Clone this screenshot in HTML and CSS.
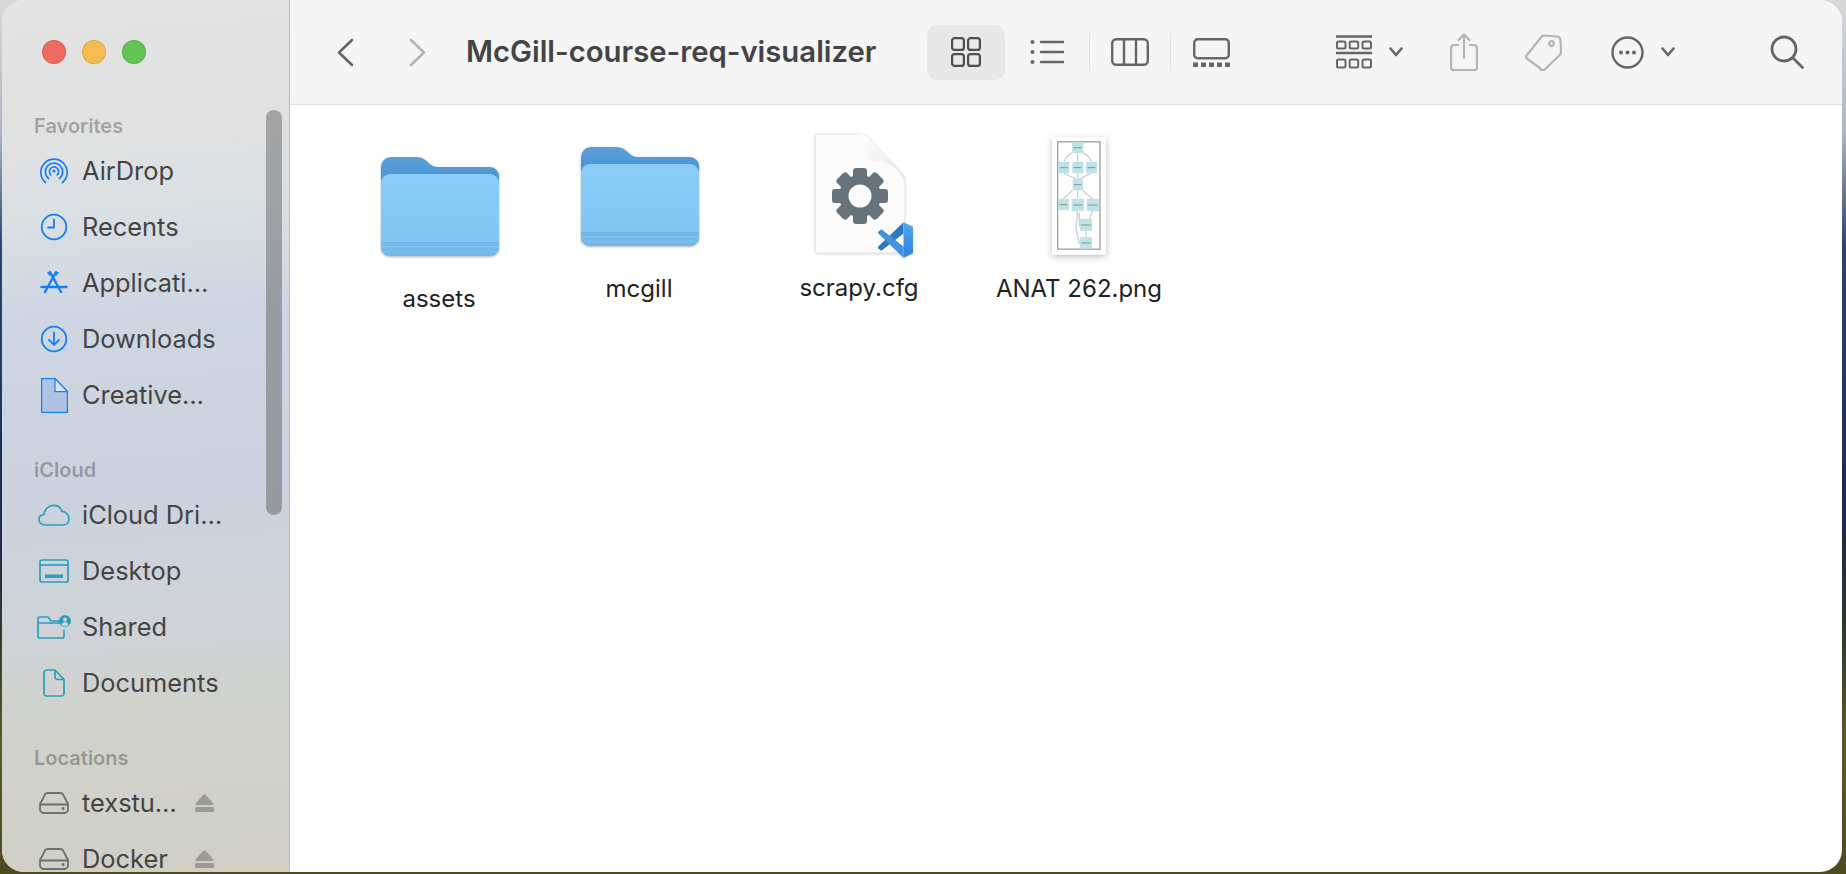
FILE: index.html
```html
<!DOCTYPE html>
<html lang="en">
<head>
  <meta charset="UTF-8" />
  <meta name="viewport" content="width=device-width, initial-scale=1">
  <title>McGill-course-req-visualizer</title>
  <link rel="stylesheet" href="styles.css">
</head>
<body>

<svg class="sprite" aria-hidden="true">
  <defs>
    <linearGradient id="folder-back" x1="0" y1="0" x2="0" y2="1">
      <stop offset="0" stop-color="#5a9fd8"/>
      <stop offset="1" stop-color="#3f8ed6"/>
    </linearGradient>
    <linearGradient id="folder-front" x1="0" y1="0" x2="0" y2="1">
      <stop offset="0" stop-color="#8bcdf8"/>
      <stop offset="1" stop-color="#7fc4f3"/>
    </linearGradient>
    <linearGradient id="badge-right" x1="0" y1="0" x2="0" y2="1">
      <stop offset="0" stop-color="#4fa8f0"/>
      <stop offset="1" stop-color="#2a80dc"/>
    </linearGradient>
    <linearGradient id="doc-fold" x1="0" y1="0" x2="1" y2="1">
      <stop offset="0" stop-color="#ffffff"/>
      <stop offset="1" stop-color="#e4e4e4"/>
    </linearGradient>
    <symbol id="folder" viewBox="0 0 118 99">
      <path fill="url(#folder-back)" d="M0 10a10 10 0 0 1 10-10h24c5 0 8 1 11 3.500c4 3.500 6 6.500 12 6.500h52a9 9 0 0 1 9 9v20h-118z"/>
      <path fill="url(#folder-front)" d="M0 26a9 9 0 0 1 9-9h100a9 9 0 0 1 9 9v64a9 9 0 0 1-9 9h-100a9 9 0 0 1-9-9z"/>
      <path fill="#74b8ea" d="M0 85h118v5a9 9 0 0 1-9 9h-100a9 9 0 0 1-9-9z"/>
      <rect y="89" width="118" height="1.500" fill="#84c4f0"/>
      <rect y="94" width="118" height="1" fill="#7ebeed"/>
    </symbol>
    <symbol id="drive" viewBox="0 0 30 22">
      <path fill="none" stroke="#6f6f6c" stroke-width="1.800" d="M6 2.500c.5-1 1.300-1.500 2.500-1.500h13c1.200 0 2 .5 2.500 1.500l5 9.500v5.500a3.500 3.500 0 0 1-3.500 3.500h-21a3.500 3.500 0 0 1-3.500-3.500v-5.500zM1 12.500h28"/>
      <circle cx="24" cy="16.500" r="1.500" fill="#6f6f6c"/>
    </symbol>
    <symbol id="eject" viewBox="0 0 19 18">
      <path fill="#9b9b93" d="M8 1a2 2 0 0 1 3 0l7.500 8.500c.5.700.2 1.500-.8 1.500h-16.400c-1 0-1.300-.8-.8-1.500z"/>
      <rect y="13" width="19" height="5" rx="1.500" fill="#9b9b93"/>
    </symbol>
  </defs>
</svg>

<div class="window">
  <aside class="sidebar">
    <div class="lights">
      <span class="light red"></span>
      <span class="light yellow"></span>
      <span class="light green"></span>
    </div>

    <h3 class="side-title">Favorites</h3>
    <div class="side-row">
      <span class="side-icon">
        <svg width="28" height="28" viewBox="0 0 28 28" fill="none" stroke="#157efb" stroke-width="1.700" stroke-linecap="round">
          <path d="M5.500 25.500a13.200 13.200 0 1 1 17 0"/>
          <path d="M8.500 21.500a8.700 8.700 0 1 1 11 0"/>
          <path d="M10.800 17.800a4.600 4.600 0 1 1 6.400 0"/>
          <circle cx="14" cy="14" r="1.600" fill="#157efb" stroke="none"/>
        </svg>
      </span>
      <span class="side-name">AirDrop</span>
    </div>
    <div class="side-row">
      <span class="side-icon">
        <svg width="28" height="28" viewBox="0 0 28 28" fill="none" stroke="#157efb" stroke-width="1.800" stroke-linecap="round" stroke-linejoin="round">
          <circle cx="14" cy="14" r="12.300"/>
          <path d="M14 6.500v8h-6"/>
        </svg>
      </span>
      <span class="side-name">Recents</span>
    </div>
    <div class="side-row">
      <span class="side-icon">
        <svg width="28" height="26" viewBox="0 0 28 26" fill="none" stroke="#157efb" stroke-width="2.400" stroke-linecap="round">
          <path d="M10 2l11 20M16 2l-11 20M1.500 17h25"/>
          <path d="M8 2.500l2 2.500M18 2.500l-2 2.500" stroke-width="1.600"/>
        </svg>
      </span>
      <span class="side-name">Applicati…</span>
    </div>
    <div class="side-row">
      <span class="side-icon">
        <svg width="28" height="28" viewBox="0 0 28 28" fill="none" stroke="#157efb" stroke-width="1.800" stroke-linecap="round" stroke-linejoin="round">
          <circle cx="14" cy="14" r="12.300"/>
          <path d="M14 7.500v12M9 14.800l5 5 5-5"/>
        </svg>
      </span>
      <span class="side-name">Downloads</span>
    </div>
    <div class="side-row">
      <span class="side-icon">
        <svg width="27" height="35" viewBox="0 0 27 35">
          <path fill="#aec3e4" stroke="#157efb" stroke-width="1.200" d="M.6.600h13.400l12.400 13v20.800h-25.800z"/>
          <path fill="#dbe3f0" stroke="#157efb" stroke-width="1.200" d="M14 .6v13h12.400z"/>
        </svg>
      </span>
      <span class="side-name">Creative…</span>
    </div>

    <h3 class="side-title spaced">iCloud</h3>
    <div class="side-row">
      <span class="side-icon">
        <svg width="32" height="22" viewBox="0 0 32 22" fill="none" stroke="#2aa0b8" stroke-width="1.700" stroke-linejoin="round">
          <path d="M7 21c-3.500 0-6-2.300-6-5.300 0-2.800 2-4.800 4.800-5 .8-5.500 4.700-9.300 9.700-9.300 4.200 0 7.300 2.400 8.500 6 4 .2 7 3.500 7 7.500 0 3.500-2.500 6.100-6 6.100z"/>
        </svg>
      </span>
      <span class="side-name">iCloud Dri…</span>
    </div>
    <div class="side-row">
      <span class="side-icon">
        <svg width="30" height="24" viewBox="0 0 30 24" fill="none" stroke="#2aa0b8" stroke-width="1.700">
          <rect x="1" y="1" width="28" height="22" rx="2"/>
          <path d="M1 6h28"/>
          <rect x="6" y="15.500" width="18" height="3.500" fill="#2aa0b8" stroke="none"/>
        </svg>
      </span>
      <span class="side-name">Desktop</span>
    </div>
    <div class="side-row">
      <span class="side-icon">
        <svg width="34" height="24" viewBox="0 0 34 24" fill="none" stroke="#2aa0b8" stroke-width="1.700" stroke-linejoin="round">
          <path d="M23 6h-9l-3-4h-8a2 2 0 0 0-2 2v17a2 2 0 0 0 2 2h22a2 2 0 0 0 2-2v-6M1 8h22"/>
          <circle cx="28" cy="6" r="6" fill="#2aa0b8" stroke="none"/>
          <circle cx="28" cy="4.500" r="1.900" fill="#cfd5de" stroke="none"/>
          <path d="M24.500 10c.5-2 1.800-3 3.500-3s3 1 3.500 3a6 6 0 0 1-7 0z" fill="#cfd5de" stroke="none"/>
        </svg>
      </span>
      <span class="side-name">Shared</span>
    </div>
    <div class="side-row">
      <span class="side-icon">
        <svg width="22" height="28" viewBox="0 0 22 28" fill="none" stroke="#2aa0b8" stroke-width="1.700" stroke-linejoin="round">
          <path d="M3.500 1h8.500l9 9.500v14a2.500 2.500 0 0 1-2.500 2.500h-15a2.500 2.500 0 0 1-2.500-2.500v-21a2.500 2.500 0 0 1 2.500-2.500zM12 1v7a2.500 2.500 0 0 0 2.500 2.500h6.500"/>
        </svg>
      </span>
      <span class="side-name">Documents</span>
    </div>

    <h3 class="side-title spaced">Locations</h3>
    <div class="side-row">
      <span class="side-icon"><svg width="30" height="22"><use href="#drive"/></svg></span>
      <span class="side-name short">texstu…</span>
      <svg class="eject" width="19" height="18"><use href="#eject"/></svg>
    </div>
    <div class="side-row">
      <span class="side-icon"><svg width="30" height="22"><use href="#drive"/></svg></span>
      <span class="side-name short">Docker</span>
      <svg class="eject" width="19" height="18"><use href="#eject"/></svg>
    </div>

    <div class="scroll-thumb"></div>
  </aside>

  <div class="content">
    <header class="toolbar">
      <svg class="back" width="17" height="29" viewBox="0 0 17 29" fill="none" stroke="#666" stroke-width="2.600" stroke-linecap="round" stroke-linejoin="round"><path d="M15 2l-13 12.500 13 12.500"/></svg>
      <svg class="forward" width="17" height="29" viewBox="0 0 17 29" fill="none" stroke="#b4b4b4" stroke-width="2.600" stroke-linecap="round" stroke-linejoin="round"><path d="M2 2l13 12.500-13 12.500"/></svg>
      <h1 class="title">McGill-course-req-visualizer</h1>

      <span class="view-selected">
        <svg width="30" height="30" viewBox="0 0 30 30" fill="none" stroke="#4f4f4f" stroke-width="2.200">
          <rect x="1.100" y="1.100" width="11.800" height="11.800" rx="2.500"/>
          <rect x="17.100" y="1.100" width="11.800" height="11.800" rx="2.500"/>
          <rect x="1.100" y="17.100" width="11.800" height="11.800" rx="2.500"/>
          <rect x="17.100" y="17.100" width="11.800" height="11.800" rx="2.500"/>
        </svg>
      </span>
      <svg class="t-list" width="34" height="26" viewBox="0 0 34 26" fill="none" stroke="#666" stroke-width="2.600" stroke-linecap="round">
        <path d="M11 3h22M11 13h22M11 23h22"/>
        <g fill="#666" stroke="none"><circle cx="2.500" cy="3" r="2"/><circle cx="2.500" cy="13" r="2"/><circle cx="2.500" cy="23" r="2"/></g>
      </svg>
      <span class="t-divider"></span>
      <svg class="t-col" width="38" height="28" viewBox="0 0 38 28" fill="none" stroke="#666" stroke-width="2.400">
        <rect x="1.200" y="1.200" width="35.600" height="25.600" rx="4"/>
        <path d="M13 1.200v25.600M25 1.200v25.600"/>
      </svg>
      <span class="t-divider d2"></span>
      <svg class="t-gallery" width="37" height="29" viewBox="0 0 37 29" fill="none" stroke="#666" stroke-width="2.400">
        <rect x="1.200" y="1.200" width="34.600" height="19" rx="3.500"/>
        <g fill="#666" stroke="none"><rect y="24.500" width="5" height="4.500"/><rect x="8" y="24.500" width="5" height="4.500"/><rect x="16" y="24.500" width="5" height="4.500"/><rect x="24" y="24.500" width="5" height="4.500"/><rect x="32" y="24.500" width="5" height="4.500"/></g>
      </svg>
      <svg class="t-group" width="36" height="34" viewBox="0 0 36 34" fill="none" stroke="#666" stroke-width="2">
        <path d="M0 1.500h36M0 18h36" stroke-width="2.600"/>
        <rect x="1" y="6.500" width="8.500" height="7" rx="1.500"/><rect x="13.700" y="6.500" width="8.500" height="7" rx="1.500"/><rect x="26.500" y="6.500" width="8.500" height="7" rx="1.500"/>
        <rect x="1" y="24.500" width="8.500" height="8" rx="1.500"/><rect x="13.700" y="24.500" width="8.500" height="8" rx="1.500"/><rect x="26.500" y="24.500" width="8.500" height="8" rx="1.500"/>
      </svg>
      <svg class="t-chev" width="14" height="10" viewBox="0 0 14 10" fill="none" stroke="#666" stroke-width="2.600" stroke-linecap="round" stroke-linejoin="round"><path d="M1.500 1.500l5.500 6.500 5.500-6.500"/></svg>
      <svg class="t-share" width="28" height="38" viewBox="0 0 28 38" fill="none" stroke="#b4b4b4" stroke-width="2.200" stroke-linecap="round" stroke-linejoin="round">
        <path d="M8 12h-4a3 3 0 0 0-3 3v19a3 3 0 0 0 3 3h20a3 3 0 0 0 3-3v-19a3 3 0 0 0-3-3h-4"/>
        <path d="M14 25v-23M8.500 7l5.500-5.500 5.500 5.500"/>
      </svg>
      <svg class="t-tag" width="37" height="37" viewBox="0 0 37 37" fill="none" stroke="#b4b4b4" stroke-width="2.200" stroke-linejoin="round">
        <path d="M15.500 34.500l-13-9.500c-1.500-1-1.600-2.500-.8-3.800l14.500-18c.7-1 1.600-1.700 3-1.700l12.500 1c2 .2 3.500 1.300 3.800 3.500l.5 11.500c0 1.300-.3 2.300-1 3.300l-14.500 14c-1.500 1.300-3.500 1.700-5 .7z"/>
        <circle cx="26.500" cy="9.500" r="2.300"/>
      </svg>
      <svg class="t-more" width="33" height="33" viewBox="0 0 33 33" fill="none" stroke="#666" stroke-width="2.400">
        <circle cx="16.500" cy="16.500" r="15"/>
        <g fill="#666" stroke="none"><circle cx="10" cy="16.500" r="2"/><circle cx="16.500" cy="16.500" r="2"/><circle cx="23" cy="16.500" r="2"/></g>
      </svg>
      <svg class="t-chev" width="14" height="10" viewBox="0 0 14 10" fill="none" stroke="#666" stroke-width="2.600" stroke-linecap="round" stroke-linejoin="round"><path d="M1.500 1.500l5.500 6.500 5.500-6.500"/></svg>
      <svg class="t-search" width="34" height="34" viewBox="0 0 34 34" fill="none" stroke="#666" stroke-width="2.800" stroke-linecap="round">
        <circle cx="14" cy="14" r="12"/>
        <path d="M23 23l9.500 9.500"/>
      </svg>
    </header>

    <main class="files">
      <div class="file low">
        <svg class="folder" width="118" height="99"><use href="#folder"/></svg>
        <span class="file-name">assets</span>
      </div>
      <div class="file">
        <svg class="folder" width="118" height="99"><use href="#folder"/></svg>
        <span class="file-name">mcgill</span>
      </div>
      <div class="file wide">
        <svg class="doc" width="102" height="126" viewBox="0 0 102 126">
          <path fill="#fbfbfb" stroke="#e4e4e4" d="M2 5a3 3 0 0 1 3-3h40c5 0 8 1 11 4l32 34c3 3 4 6 4 10v68a3 3 0 0 1-3 3h-84a3 3 0 0 1-3-3z"/>
          <path fill="url(#doc-fold)" d="M45 2c5 0 8 1 11 4l32 34c3 3 4 6 4 10-5-12-14-20-26-21-4 0-7 0-9-2-6-6-4-17-12-25z"/>
          <g fill="#66737a" transform="translate(47 64)">
            <circle r="21"/>
            <rect x="-7" y="-28" width="14" height="14" rx="3"/>
            <rect x="-7" y="-28" width="14" height="14" rx="3" transform="rotate(45)"/>
            <rect x="-7" y="-28" width="14" height="14" rx="3" transform="rotate(90)"/>
            <rect x="-7" y="-28" width="14" height="14" rx="3" transform="rotate(135)"/>
            <rect x="-7" y="-28" width="14" height="14" rx="3" transform="rotate(180)"/>
            <rect x="-7" y="-28" width="14" height="14" rx="3" transform="rotate(225)"/>
            <rect x="-7" y="-28" width="14" height="14" rx="3" transform="rotate(270)"/>
            <rect x="-7" y="-28" width="14" height="14" rx="3" transform="rotate(315)"/>
            <circle r="11.500" fill="#fbfbfb"/>
          </g>
          <g transform="translate(63.500 89) scale(.38)">
            <path fill="#2f78c0" d="M71 3l-67 65v4l9 6 58-45z"/>
            <path fill="#3f93e0" d="M4 28l9-6 58 45v30l-67-65z"/>
            <path fill="url(#badge-right)" d="M71 3l25 12v70l-25 12z"/>
          </g>
        </svg>
        <span class="file-name">scrapy.cfg</span>
      </div>
      <div class="file wide">
        <svg class="thumb" width="54" height="118" viewBox="68 35 162 353">
          <rect x="68" y="35" width="162" height="353" fill="#fff"/>
          <rect x="85" y="49" width="127" height="322" fill="#fff" stroke="#a0a0a0" stroke-width="4"/>
          <path fill="none" stroke="#cfcfcf" stroke-width="4" d="M145 83v25M128 83c-15 5-20 15-24 25M162 83c15 5 18 15 24 25M104 143l40 20M145 143v20M186 143l-40 20M130 194l-30 27M145 194v27M160 194l30 27M145 256l-5 50 10 50M190 256l-10 25M170 316v35M150 262v40"/>
          <g fill="#bfe2e7">
            <rect x="128" y="50" width="34" height="33"/>
            <rect x="87" y="109" width="33" height="34"/>
            <rect x="129" y="109" width="33" height="34"/>
            <rect x="170" y="109" width="33" height="34"/>
            <rect x="130" y="161" width="31" height="33"/>
            <rect x="87" y="220" width="32" height="34"/>
            <rect x="127" y="220" width="37" height="37"/>
            <rect x="172" y="220" width="37" height="37"/>
            <rect x="152" y="280" width="36" height="36"/>
            <rect x="152" y="335" width="36" height="35"/>
          </g>
          <g fill="#7f9499">
            <rect x="133" y="65" width="24" height="3"/>
            <rect x="91" y="125" width="24" height="3"/>
            <rect x="133" y="125" width="24" height="3"/>
            <rect x="174" y="125" width="24" height="3"/>
            <rect x="134" y="176" width="23" height="3"/>
            <rect x="91" y="236" width="23" height="3"/>
            <rect x="131" y="237" width="28" height="3"/>
            <rect x="176" y="237" width="28" height="3"/>
            <rect x="156" y="297" width="28" height="3"/>
            <rect x="156" y="351" width="28" height="3"/>
          </g>
        </svg>
        <span class="file-name">ANAT 262.png</span>
      </div>
    </main>
  </div>
</div>

</body>
</html>
```

FILE: styles.css
```css
html, body {
  margin: 0;
  padding: 0;
  height: 874px;
  overflow: hidden;
}

body {
  font-family: 'Inter', 'Liberation Sans', sans-serif;
  background: linear-gradient(180deg, #d8d8d8 0%, #aeb6c4 15%, #2c4470 28%, #1b2a50 60%, #2e3a2c 72%, #5d5a26 85%, #4d4a22 100%);
}

.sprite {
  position: absolute;
  width: 0;
  height: 0;
}

.window {
  display: flex;
  height: 872px;
  margin: 0 4px 2px 2px;
  border-radius: 22px;
  overflow: hidden;
  background: white;
}

.sidebar {
  position: relative;
  flex: none;
  width: 288px;
  box-sizing: border-box;
  background: linear-gradient(176deg, #e3e3e3 0%, #e1e1e1 15%, #dbe0e3 24%, #ced6e2 36%, #cbd2de 55%, #ced3da 68%, #d1d2cc 82%, #cfcfc6 100%);
  border-right: 1px solid #bdbdb8;
  overflow: hidden;
}

.lights {
  display: flex;
  gap: 16px;
  padding: 40px 0 0 40px;
  margin-bottom: 45px;
}

.light {
  width: 22px;
  height: 22px;
  border-radius: 50%;
  border: 1px solid rgba(0,0,0,0.1);
}

.red { background-color: #ee6a5f; }
.yellow { background-color: #f5bd4f; }
.green { background-color: #61c454; }

.side-title {
  height: 34px;
  line-height: 34px;
  margin: 0;
  padding-left: 32px;
  font-size: 20px;
  font-weight: 600;
  color: rgba(0,0,0,0.3);
}

.side-title.spaced {
  margin-top: 30px;
}

.side-row {
  display: flex;
  align-items: center;
  height: 56px;
  padding-left: 33px;
  color: #444;
  font-size: 25.400px;
}

.side-icon {
  display: flex;
  flex: none;
  align-items: center;
  justify-content: center;
  width: 38px;
  margin-right: 9px;
}

.side-name {
  flex: none;
  padding-bottom: 2px;
  white-space: nowrap;
}

.side-name.short {
  width: 113px;
}

.eject {
  flex: none;
}

.scroll-thumb {
  position: absolute;
  top: 110px;
  left: 264px;
  width: 16px;
  height: 405px;
  border-radius: 8px;
  background-color: rgba(70,70,70,0.4);
}

.content {
  flex: 1;
  min-width: 0;
}

.toolbar {
  display: flex;
  align-items: center;
  box-sizing: border-box;
  height: 105px;
  padding-left: 47px;
  background-color: #f5f5f5;
  border-bottom: 1px solid #dedede;
}

.toolbar svg {
  flex: none;
}

.forward { margin-left: 55px; }

.title {
  flex: none;
  width: 461px;
  margin: 0 0 0 40px;
  padding-bottom: 2px;
  font-size: 29.300px;
  font-weight: 600;
  color: #444;
  white-space: nowrap;
}

.view-selected {
  display: flex;
  flex: none;
  align-items: center;
  justify-content: center;
  width: 78px;
  height: 55px;
  border-radius: 10px;
  background-color: #e8e8e8;
}

.t-list { margin-left: 25px; }

.t-divider {
  flex: none;
  width: 1px;
  height: 38px;
  margin-left: 25px;
  background-color: #e0e0e0;
}

.t-divider.d2 { margin-left: 21px; }
.t-col { margin-left: 21px; }
.t-gallery { margin-left: 22px; }
.t-group { margin-left: 106px; }
.t-chev { margin-left: 17px; }
.t-share { margin-left: 47px; }
.t-tag { margin-left: 47px; }
.t-more { margin-left: 49px; }
.t-search { margin-left: 95px; }

.files {
  display: flex;
  padding: 29px 0 0 49px;
}

.file {
  display: flex;
  flex: none;
  flex-direction: column;
  align-items: center;
  width: 200px;
  padding-top: 13px;
}

.file.low {
  padding-top: 23px;
}

.file.wide {
  margin-left: 20px;
}

.folder {
  margin-left: 1px;
  filter: drop-shadow(0 1px 1px rgba(0,0,0,0.3));
}

.doc {
  margin: -15px 0 0 10px;
  filter: drop-shadow(0 1px 1px rgba(0,0,0,0.12));
}

.thumb {
  margin-top: -10px;
  filter: drop-shadow(0 2px 3px rgba(0,0,0,0.25)) blur(0.6px);
}

.file-name {
  margin-top: 28px;
  font-size: 24px;
  line-height: 30px;
  color: #222;
  white-space: nowrap;
}

.doc + .file-name {
  margin-top: 15px;
}

.thumb + .file-name {
  margin-top: 19px;
}
```
